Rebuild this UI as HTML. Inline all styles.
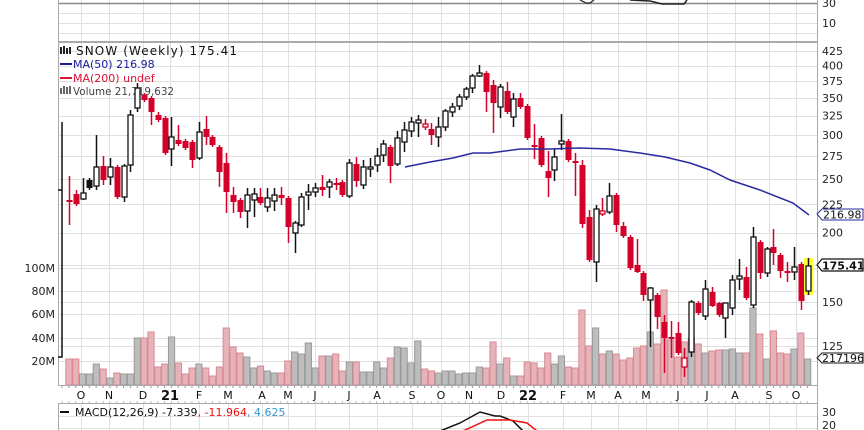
<!DOCTYPE html>
<html><head><meta charset="utf-8"><style>
html,body{margin:0;padding:0;background:#fff;width:864px;height:430px;overflow:hidden}
svg{display:block;font-family:"DejaVu Sans","Liberation Sans",sans-serif}
</style></head><body>
<svg id="s" width="864" height="430" viewBox="0 0 864 430" xmlns="http://www.w3.org/2000/svg">
<rect width="864" height="430" fill="#fff"/>
<g id="grid" stroke="#e0e0e0" stroke-width="1"></g>
<g id="vol"></g>
<g id="cand"></g>
<line x1="58" y1="3.5" x2="817" y2="3.5" stroke="#888" stroke-width="1.5"/>
<line x1="58" y1="42" x2="817" y2="42" stroke="#aaa" stroke-width="2"/>
<polyline points="580,0 586,3 590,3 594,0" fill="none" stroke="#222" stroke-width="1.2"/>
<polyline points="630,0 650,1 662,4 684,4 687,0" fill="none" stroke="#222" stroke-width="1.5"/>
<text x="822" y="7" font-size="11" fill="#222">30</text>
<text x="822" y="27" font-size="11" fill="#222">10</text>
<line x1="58.5" y1="0" x2="58.5" y2="385" stroke="#aaa"/>
<line x1="817.5" y1="0" x2="817.5" y2="430" stroke="#aaa"/>
<line x1="58" y1="385.5" x2="817" y2="385.5" stroke="#aaa"/>
<line x1="58" y1="403.5" x2="817" y2="403.5" stroke="#aaa"/>
<line x1="58.5" y1="403" x2="58.5" y2="430" stroke="#aaa"/>
<polyline points="405,167 430,162 453,158 473,153 490,153 520,149 550,149 579,148 610,149 640,153 665,157 690,163 710,170 730,180 760,190 793,203 809,215" fill="none" stroke="#2a2aa0" stroke-width="1.5"/>
<polyline points="62,122 62,357 58,357" fill="none" stroke="#111" stroke-width="1.5"/>
<line x1="58" y1="190" x2="62" y2="190" stroke="#111" stroke-width="1.5"/>
<g font-size="11">
<g fill="#222"><rect x="60" y="47" width="2" height="7"/><rect x="63" y="46" width="2" height="8"/><rect x="66" y="48" width="2" height="6"/><rect x="69" y="47" width="2" height="7"/></g>
<text x="76" y="55" fill="#111" font-size="12" textLength="161" lengthAdjust="spacing">SNOW (Weekly) 175.41</text>
<rect x="60" y="63" width="12" height="2" fill="#1a1a99"/>
<text x="73" y="68" fill="#1a1a99">MA(50) 216.98</text>
<rect x="60" y="77" width="12" height="2" fill="#dd1133"/>
<text x="73" y="82" fill="#dd1133">MA(200) undef</text>
<g fill="#666"><rect x="60" y="88" width="2" height="6"/><rect x="63" y="86" width="2" height="8"/><rect x="66" y="87" width="2" height="7"/><rect x="69" y="86" width="2" height="8"/></g>
<text x="73" y="95" fill="#444" textLength="101" lengthAdjust="spacingAndGlyphs">Volume 21,719,632</text>
</g>
<g font-size="11" fill="#222" id="plab"></g>
<g font-size="11" fill="#222" text-anchor="end">
<text x="55" y="272">100M</text><text x="55" y="295">80M</text><text x="55" y="318">60M</text><text x="55" y="342">40M</text><text x="55" y="365">20M</text>
</g>
<path d="M817,214 L822,209 L863,209 L863,220 L822,220 Z" fill="#fff" stroke="#2a2aa0"/>
<text x="823" y="218.5" font-size="11" fill="#111">216.98</text>
<path d="M817,265 L822,259 L863,259 L863,271 L822,271 Z" fill="#fff" stroke="#111" stroke-width="1.2"/>
<text x="822" y="269.5" font-size="11" font-weight="bold" fill="#111">175.41</text>
<path d="M817,358 L822,353 L863,353 L863,363 L822,363 Z" fill="#fff" stroke="#111"/>
<text x="822" y="362" font-size="11" fill="#111">217196</text>
<g font-size="11" fill="#111" text-anchor="middle" id="xlab"></g>
<g font-size="11">
<rect x="60" y="411" width="9" height="2" fill="#111"/>
<text x="75" y="416" fill="#111">MACD(12,26,9) -7.339<tspan fill="#ee1111">, -11.964</tspan><tspan fill="#3399cc">, 4.625</tspan></text>
<text x="822" y="416" fill="#222">30</text>
<text x="822" y="429" fill="#222">20</text>
</g>
<polyline points="440,431 460,423 480,412 495,416 500,416 513,421 523,431" fill="none" stroke="#111" stroke-width="1.5"/>
<polyline points="463,431 487,420 510,420 527,423 537,431" fill="none" stroke="#ee1111" stroke-width="1.5"/>
</svg>
<script>
var NS="http://www.w3.org/2000/svg";
function el(p,t,a){var e=document.createElementNS(NS,t);for(var k in a)e.setAttribute(k,a[k]);p.appendChild(e);return e;}
var g=document.getElementById('grid');
var mx=[81,109,143,170,199,228,262,288,315,349,377,412,441,469,501,528,563,591,618,646,678,707,735,769,796];
var ml=["O","N","D","21","F","M","A","M","J","J","A","S","O","N","D","22","F","M","A","M","J","J","A","S","O"];
mx.forEach(function(x){el(g,'line',{x1:x+.5,y1:0,x2:x+.5,y2:385});el(g,'line',{x1:x+.5,y1:403,x2:x+.5,y2:430});});
[13,23,33].forEach(function(y){el(g,'line',{x1:58,y1:y+.5,x2:817,y2:y+.5});});
[268,291,314,338,361].forEach(function(y){el(g,'line',{x1:58,y1:y+.5,x2:817,y2:y+.5});});
el(g,'line',{x1:58,y1:416.5,x2:817,y2:416.5});el(g,'line',{x1:58,y1:428.5,x2:817,y2:428.5});
var pl=document.getElementById('plab');
[425,400,375,350,325,300,275,250,225,200,175,150,125].forEach(function(p){var y=51+241*Math.log(425/p);el(g,'line',{x1:58,y1:Math.round(y)+.5,x2:817,y2:Math.round(y)+.5});if(p!=175){var t=el(pl,'text',{x:822,y:y+4});t.textContent=p;}});
var xl=document.getElementById('xlab');
mx.forEach(function(x,i){var a={x:x,y:399};if(i==3||i==15){a['font-weight']='bold';a['font-size']='13';a.y=400;}var t=el(xl,'text',a);t.textContent=ml[i];});
for(var i=0;i<110;i++){var x=62+6.84*i;el(g,'line',{x1:x,y1:385,x2:x,y2:388,stroke:'#999'});el(g,'line',{x1:x,y1:401,x2:x,y2:403,stroke:'#bbb'});}
var vs="p359 p359 g374 g374 g364 p369 g378 p373 g374 g374 g338 p338 p332 p367 p364 g337 p363 p374 p368 g364 p368 p376 p367 p328 p347 p353 g357 g368 p366 g371 g373 p373 p361 g352 g354 g343 g368 p356 g356 p354 p371 g362 p362 g372 g372 g362 g368 p358 g347 g348 g363 g341 p369 p371 g373 g371 g371 g374 g373 g373 g367 p368 p342 g364 p358 g376 p376 p362 p363 p368 p353 g364 g356 p367 p368 p310 p346 g328 p354 g351 p354 p360 p358 p348 p346 g332 p344 p290 p340 p357 p342 g338 p344 g353 p351 p350 g350 g349 g353 p353 g308 p334 g359 p331 p353 p354 g349 p333 g359".split(" ");
var vg=document.getElementById('vol');
vs.forEach(function(v,k){var i=k+1,x=62+6.84*i,y=+v.slice(1),p=v[0]=='p';el(vg,'rect',{x:x-3,y:y,width:6.2,height:385-y,fill:p?'#e6b3b9':'#bdbdbd',stroke:p?'#d88a95':'#9a9a9a','stroke-width':1});});
var cs=`r 200 202 176 225
r 194 204 190 206
w 193 199 178 200
b 180 188 178 190
w 167 186 135 190
r 166 180 156 185
w 167 177 158 185
r 167 197 165 199
w 166 197 164 202
w 115 165 110 172
w 88 108 83 112
r 95 100 93 102
r 98 112 96 125
r 115 120 112 122
r 118 153 116 155
w 137 149 117 166
r 140 144 125 146
r 141 148 139 150
r 142 160 140 168
w 132 158 122 160
r 129 137 116 145
r 137 145 135 147
r 147 172 145 187
r 163 192 153 213
r 195 202 187 213
r 200 212 198 218
w 195 211 188 228
w 194 200 188 217
r 197 203 188 205
w 198 207 188 212
w 195 201 188 211
r 195 198 187 205
r 198 227 196 243
w 223 233 221 253
w 197 225 193 227
w 192 195 184 210
w 188 192 183 197
r 187 190 175 196
w 182 187 179 198
r 183 185 178 190
r 182 195 180 197
w 163 196 159 198
r 164 181 157 187
w 167 185 160 189
w 167 169 158 177
w 156 165 148 172
w 144 155 140 162
r 147 166 145 183
w 138 164 131 166
w 130 142 122 152
w 122 131 117 137
w 120 123 115 137
h 124 127 119 130
r 129 135 123 145
w 127 137 117 147
w 111 127 109 131
w 107 112 103 117
w 97 106 94 110
w 89 97 87 100
w 76 88 74 93
w 73 76 65 77
r 73 92 71 112
r 85 103 80 133
w 87 107 84 118
r 91 112 82 114
w 99 117 93 127
r 98 107 93 109
r 106 138 104 140
r 145 147 124 159
r 138 165 136 167
r 171 178 151 197
w 157 170 148 181
w 141 144 114 150
r 141 160 139 162
r 161 163 153 196
r 165 224 160 228
r 217 260 210 262
w 209 262 205 282
h 211 214 198 216
w 196 212 183 214
r 195 225 193 232
r 226 236 222 238
r 237 268 235 270
r 265 272 239 273
r 273 295 271 301
w 288 300 287 347
r 295 317 293 329
r 322 338 315 373
r 337 339 321 358
r 333 353 322 355
h 358 367 348 377
w 302 352 300 357
r 303 313 301 315
w 289 316 280 320
r 292 306 287 307
r 303 315 302 317
w 303 318 303 338
w 280 308 275 315
w 276 279 259 290
r 277 298 267 300
w 237 305 227 308
r 242 273 240 279
w 249 273 247 277
r 247 253 229 265
r 255 271 253 278
r 271 273 262 282
w 267 272 247 280
r 264 301 262 310
y 266 291 258 295`.split("\n");
var cg=document.getElementById('cand');
cs.forEach(function(l,k){var a=l.split(" "),t=a[0],bt=+a[1],bb=+a[2],wt=+a[3],wb=+a[4],i=k+1,x=Math.round(62+6.84*i)+.5;
 if(t=='y')el(cg,'rect',{x:x-4.5,y:bt-8,width:9,height:bb-bt+12,fill:'#ffff33'});
 var red=(t=='r'||t=='h'),col=red?'#d4002a':'#111';
 el(cg,'line',{x1:x,y1:wt,x2:x,y2:wb,stroke:col,'stroke-width':1.5});
 var h=Math.max(bb-bt,1.5);
 if(t=='r')el(cg,'rect',{x:x-3,y:bt,width:6,height:h,fill:col});
 else if(t=='b')el(cg,'rect',{x:x-3,y:bt,width:6,height:h,fill:'#111'});
 else el(cg,'rect',{x:x-2.5,y:bt,width:5,height:h,fill:'#fff',stroke:col,'stroke-width':1.3});
});
</script>
</body></html>
